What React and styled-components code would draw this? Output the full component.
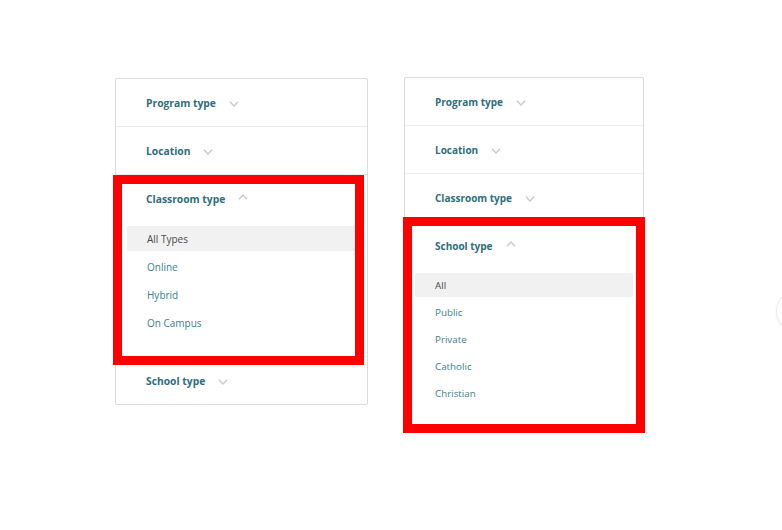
import React from 'react'
import styled, { createGlobalStyle } from 'styled-components'

const GlobalStyle = createGlobalStyle`
  html, body {
    margin: 0;
    padding: 0;
    background: #fff;
  }
  body {
    font-family: 'Open Sans', 'Liberation Sans', sans-serif;
  }
`

const Page = styled.div`
  position: relative;
  width: 782px;
  height: 530px;
  overflow: hidden;
  display: flex;
  align-items: flex-start;
  gap: 36px;
  padding: 77px 0 0 115px;
  box-sizing: border-box;
`

// each screenshot half is at a slightly different scale, so rows/fonts vary per panel
const Panel = styled.div`
  --row: ${({ $row }) => $row}px;
  --item: ${({ $item }) => $item}px;
  --head-size: ${({ $head }) => $head}px;
  --item-size: ${({ $text }) => $text}px;
  --inset: ${({ $inset }) => $inset}px;
  --pad-bottom: ${({ $padBottom }) => $padBottom}px;
  width: ${({ $width }) => $width}px;
  margin-top: ${({ $offset }) => $offset || 0}px;
  border: 1px solid #dcdcdc;
  border-radius: 2px;
  box-sizing: border-box;
  background: #fff;
`

const Section = styled.div`
  position: relative;
  border-bottom: 1px solid #ececec;

  &:last-child {
    border-bottom: none;
  }
`

const Header = styled.div`
  height: var(--row);
  display: flex;
  align-items: center;
  padding-left: 30px;
  box-sizing: border-box;
  font-size: var(--head-size);
  font-weight: 700;
  color: #2f6e7d;
`

const Chevron = styled.svg`
  width: 10px;
  height: 6px;
  margin-left: 13px;
  margin-top: ${({ $up }) => ($up ? '-4px' : '3px')};
`

const List = styled.div`
  display: flex;
  flex-direction: column;
  gap: 3px;
  padding: 4px 10px var(--pad-bottom) var(--inset);
`

const Item = styled.div`
  height: var(--item);
  display: flex;
  align-items: center;
  padding-left: 20px;
  font-size: var(--item-size);
  color: ${({ $active }) => ($active ? '#4a4a4a' : '#3a8091')};
  background: ${({ $active }) => ($active ? '#f1f1f1' : 'transparent')};
  border-radius: 2px;
`

const Marker = styled.div`
  position: absolute;
  top: ${({ $box }) => $box[0]}px;
  right: ${({ $box }) => $box[1]}px;
  bottom: ${({ $box }) => $box[2]}px;
  left: ${({ $box }) => $box[3]}px;
  border: 9px solid #ff0000;
  pointer-events: none;
`

const EdgeButton = styled.div`
  position: absolute;
  left: 776px;
  top: 290px;
  width: 40px;
  height: 40px;
  border-radius: 50%;
  border: 1px solid #ececec;
  box-shadow: 0 1px 3px rgba(0, 0, 0, 0.06);
  background: #fff;
`

const Arrow = ({ up }) => (
  <Chevron $up={up} viewBox="0 0 10 6">
    <path
      d={up ? 'M1 5.2 L5 1 L9 5.2' : 'M1 0.8 L5 5 L9 0.8'}
      fill="none"
      stroke="#c9c9c9"
      strokeWidth="1.4"
    />
  </Chevron>
)

const Filter = ({ title, options, marker }) => (
  <Section>
    <Header>
      {title}
      <Arrow up={!!options} />
    </Header>
    {options && (
      <List>
        {options.map((o, i) => (
          <Item key={o} $active={i === 0}>
            {o}
          </Item>
        ))}
      </List>
    )}
    {marker && <Marker $box={marker} />}
  </Section>
)

const App = () => {
  return (
    <Page>
      <GlobalStyle />
      <Panel
        $width={253}
        $row={47}
        $item={25}
        $head={10.3}
        $text={10}
        $inset={11}
        $padBottom={21}
        $offset={1}
      >
        <Filter title="Program type" />
        <Filter title="Location" />
        <Filter
          title="Classroom type"
          options={['All Types', 'Online', 'Hybrid', 'On Campus']}
          marker={[0, 3, -9, -3]}
        />
        <Filter title="School type" />
      </Panel>
      <Panel $width={240} $row={47} $item={24} $head={10} $text={9.8} $inset={10} $padBottom={20}>
        <Filter title="Program type" />
        <Filter title="Location" />
        <Filter title="Classroom type" />
        <Filter
          title="School type"
          options={['All', 'Public', 'Private', 'Catholic', 'Christian']}
          marker={[-5, -2, -8, -2]}
        />
      </Panel>
      <EdgeButton />
    </Page>
  )
}

export default App
